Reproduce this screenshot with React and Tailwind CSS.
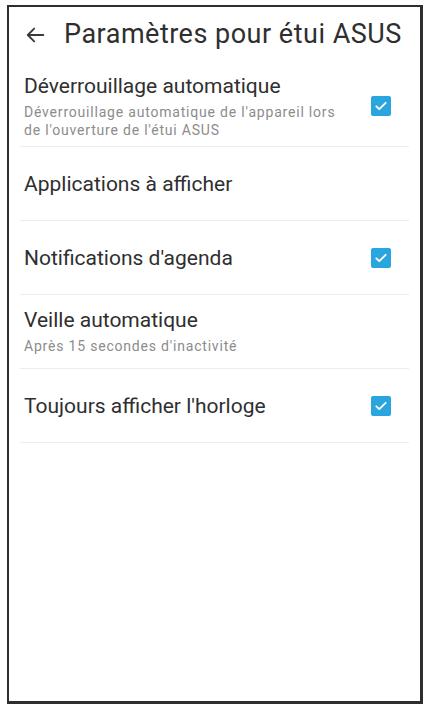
import React from 'react';

const Check = () => (
    <div className="w-[20px] h-[20px] rounded-[2px] bg-[#2aa6df] flex items-center justify-center shrink-0">
        <svg width="14" height="14" viewBox="0 0 24 24" fill="none" stroke="white" strokeWidth="3.2" strokeLinecap="round" strokeLinejoin="round">
            <path d="M4 12.5l5 5L20 6.5" />
        </svg>
    </div>
);

const Row = ({ title, sub, checked, tall }) => (
    <div className={`mx-[11px] border-b border-[#ececec] flex items-center pl-[4px] pr-[18px] ${tall ? 'h-[87px] pt-[6px]' : 'h-[74px]'}`}>
        <div className="flex-1 min-w-0">
            <div className="text-[21px] leading-[24px] text-[#2f2f2f]">{title}</div>
            {sub && (
                <div className="mt-[5px]">
                    {sub.map((line) => (
                        <div key={line} className="text-[14px] leading-[18px] tracking-[0.8px] text-[#8c8c8c]">{line}</div>
                    ))}
                </div>
            )}
        </div>
        {checked && <Check />}
    </div>
);

export default function App() {
    return (
        <div className="min-h-screen bg-white pt-[5px] pl-[7px]" style={{ fontFamily: 'Roboto, "Noto Sans", sans-serif' }}>
            <div className="w-[416px] h-[699px] border-l-2 border-t-2 border-r-[3px] border-b-[3px] border-[#2e2e2e] bg-white">
                {/* Header */}
                <div className="h-[53px] flex items-center pl-[16px] pt-[2px]">
                    <svg width="22" height="22" viewBox="0 0 24 24" fill="none" stroke="#3a3a3a" strokeWidth="2" strokeLinecap="round" strokeLinejoin="round">
                        <path d="M20 12H4" />
                        <path d="M10 5l-7 7 7 7" />
                    </svg>
                    <span className="ml-[17px] text-[27px] tracking-[0.5px] text-[#2f2f2f] whitespace-nowrap">Paramètres pour étui ASUS</span>
                </div>

                <Row
                    tall
                    title="Déverrouillage automatique"
                    sub={["Déverrouillage automatique de l'appareil lors", "de l'ouverture de l'étui ASUS"]}
                    checked
                />
                <Row title="Applications à afficher" />
                <Row title="Notifications d'agenda" checked />
                <Row title="Veille automatique" sub={["Après 15 secondes d'inactivité"]} />
                <Row title="Toujours afficher l'horloge" checked />
            </div>
        </div>
    );
}
